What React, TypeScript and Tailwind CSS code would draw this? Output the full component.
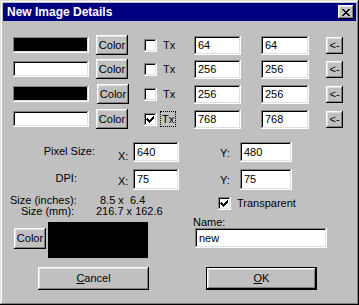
const raised =
  "bg-[#c0c0c0] shadow-[inset_-1px_-1px_0_#000,inset_1px_1px_0_#fff,inset_-2px_-2px_0_#808080,inset_2px_2px_0_#dfdfdf]";
const sunken =
  "shadow-[inset_-1px_-1px_0_#fff,inset_1px_1px_0_#808080,inset_-2px_-2px_0_#dfdfdf,inset_2px_2px_0_#000]";

type RowProps = {
  swatch: "black" | "white";
  checked?: boolean;
  focus?: boolean;
  a: string;
  b: string;
  shift?: boolean;
};

const Btn = ({ label, className }: { label: React.ReactNode; className: string }) => (
  <div className={`${raised} flex items-center justify-center shrink-0 ${className}`}>{label}</div>
);

const Field = ({ value, className }: { value: string; className: string }) => (
  <div className={`bg-white ${sunken} flex items-center pl-[4px] shrink-0 ${className}`}>{value}</div>
);

const Check = ({ checked }: { checked?: boolean }) => (
  <div className={`bg-white ${sunken} w-[13px] h-[13px] shrink-0 relative`}>
    {checked && (
      <svg className="absolute left-0 top-0" width="13" height="13" viewBox="0 0 13 13">
        <path d="M3 5h1v1h1v1h1v-1h1v-1h1v-1h1v-1h1v3h-1v1h-1v1h-1v1h-1v1h-1v-1h-1v-1h-1v-1h-1z" fill="#000" />
      </svg>
    )}
  </div>
);

const SwatchRow = ({ swatch, checked, focus, a, b, shift }: RowProps) => (
  <div className="flex items-center h-[20px]">
    <div
      className={`ml-[10px] w-[76px] h-[16px] shrink-0 ${swatch === "black" ? "bg-black" : "bg-white"} ${sunken}`}
    />
    <Btn label="Color" className={`${shift ? "ml-[8px]" : "ml-[7px]"} w-[32px] h-[20px]`} />
    <div className={`${shift ? "ml-[15px]" : "ml-[16px]"} w-[50px] flex items-center shrink-0`}>
      <Check checked={checked} />
      {focus ? (
        <span className="ml-[4px] px-[1px] leading-[14px] outline outline-1 outline-dotted outline-black">Tx</span>
      ) : (
        <span className="ml-[6px]">Tx</span>
      )}
    </div>
    <Field value={a} className="w-[47px] h-[19px]" />
    <Field value={b} className="ml-[20px] w-[48px] h-[19px]" />
    <Btn label="<-" className="ml-[17px] w-[17px] h-[17px] text-[11px]" />
  </div>
);

const App = () => {
  return (
    <div
      className={`w-[359px] h-[305px] bg-[#c0c0c0] p-[3px] text-[11px] leading-[13px] text-black [font-family:'Liberation_Sans',Arial,sans-serif] shadow-[inset_-1px_-1px_0_#000,inset_1px_1px_0_#dfdfdf,inset_-2px_-2px_0_#808080,inset_2px_2px_0_#fff]`}
    >
      {/* title bar */}
      <div className="h-[18px] bg-[#000080] flex items-center justify-between">
        <span className="pl-[4px] text-white font-bold text-[12px]">New Image Details</span>
        <div className={`${raised} w-[16px] h-[14px] mr-[2px] flex items-center justify-center`}>
          <svg width="8" height="7" viewBox="0 0 8 7">
            <path
              d="M0 0h2v1h1v1h2v-1h1v-1h2v1h-1v1h-1v1h-1v1h1v1h1v1h1v1h-2v-1h-1v-1h-2v1h-1v1h-2v-1h1v-1h1v-1h1v-1h-1v-1h-1v-1h-1z"
              fill="#000"
            />
          </svg>
        </div>
      </div>

      <div className="mt-[14px]">
        <SwatchRow swatch="black" a="64" b="64" />
      </div>
      <div className="mt-[4px]">
        <SwatchRow swatch="white" a="256" b="256" />
      </div>
      <div className="mt-[5px]">
        <SwatchRow swatch="black" a="256" b="256" shift />
      </div>
      <div className="mt-[5px]">
        <SwatchRow swatch="white" a="768" b="768" checked focus />
      </div>

      <div className="mt-[13px] flex">
        {/* left column */}
        <div className="w-[187px] shrink-0">
          <div className="flex items-start h-[20px]">
            <span className="w-[92px] text-right mt-[3px]">Pixel Size:</span>
            <span className="ml-[23px] w-[15px] mt-[8px]">X:</span>
            <Field value="640" className="w-[46px] h-[20px]" />
          </div>
          <div className="mt-[7px] flex items-start h-[21px]">
            <span className="w-[74px] text-right mt-[3px]">DPI:</span>
            <span className="ml-[41px] w-[15px] mt-[6px]">X:</span>
            <Field value="75" className="w-[46px] h-[21px]" />
          </div>
          <div className="mt-[5px] leading-[11px] flex whitespace-pre">
            <span className="w-[90px] pl-[7px]">Size (inches):</span>
            <span className="ml-[7px]">8.5 x  6.4</span>
          </div>
          <div className="leading-[11px] flex whitespace-pre">
            <span className="w-[90px] pl-[18px]">Size (mm):</span>
            <span className="ml-[3px]">216.7 x 162.6</span>
          </div>
          <div className="mt-[5px] flex items-start">
            <Btn label="Color" className="ml-[11px] mt-[6px] w-[32px] h-[21px]" />
            <div className="ml-[2px] w-[100px] h-[36px] bg-black" />
          </div>
          <Btn
            label={
              <span>
                <span className="underline">C</span>ancel
              </span>
            }
            className="mt-[9px] ml-[35px] w-[111px] h-[23px]"
          />
        </div>

        {/* right column */}
        <div className="flex-1">
          <div className="flex items-start h-[20px]">
            <span className="ml-[30px] w-[20px] mt-[5px]">Y:</span>
            <Field value="480" className="w-[52px] h-[20px]" />
          </div>
          <div className="mt-[7px] flex items-start h-[21px]">
            <span className="ml-[30px] w-[20px] mt-[5px]">Y:</span>
            <Field value="75" className="w-[52px] h-[21px]" />
          </div>
          <div className="mt-[7px] flex items-center">
            <div className="ml-[28px]">
              <Check checked />
            </div>
            <span className="ml-[6px]">Transparent</span>
          </div>
          <div className="mt-[6px] ml-[3px] leading-[12px]">Name:</div>
          <Field value="new" className="ml-[5px] w-[132px] h-[20px]" />
          <div className="mt-[19px] ml-[16px] w-[111px] h-[23px] border border-black">
            <Btn
              label={
                <span>
                  <span className="underline">O</span>K
                </span>
              }
              className="w-full h-full"
            />
          </div>
        </div>
      </div>
    </div>
  );
};

export default App;
